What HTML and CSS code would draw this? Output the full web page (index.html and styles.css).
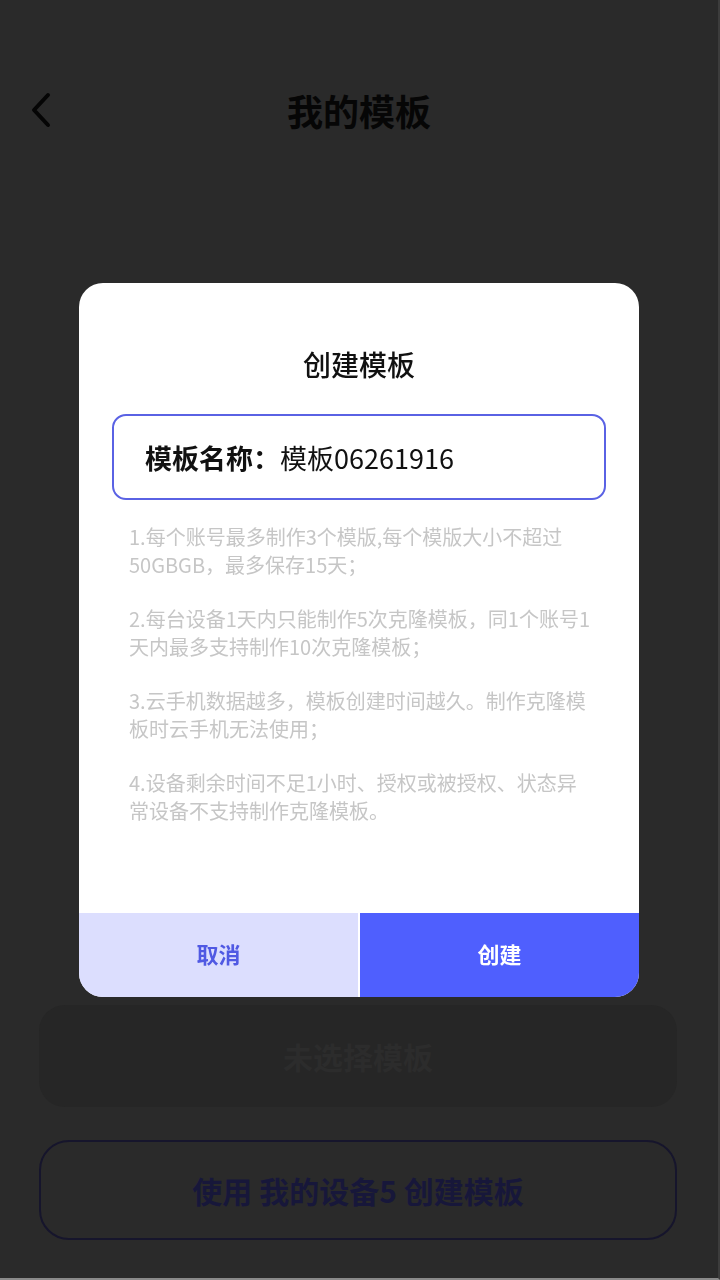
FILE: index.html
```html
<!DOCTYPE html>
<html lang="zh">
<head>
<meta charset="utf-8">
<title>我的模板</title>
<link rel="stylesheet" href="styles.css">
</head>
<body>
<div class="page">
  <header class="topbar">
    <div class="back">
      <svg width="24" height="36" viewBox="0 0 24 36"><path d="M18 3 L4 18 L18 33" fill="none" stroke="#050505" stroke-width="4" stroke-linecap="round" stroke-linejoin="round"/></svg>
    </div>
    <h1 class="title">我的模板</h1>
    <div></div>
  </header>
  <div class="spacer"></div>
  <div class="actions">
    <div class="btn-none">未选择模板</div>
    <div class="btn-use">使用 我的设备5 创建模板</div>
  </div>
</div>

<div class="overlay">
  <div class="dialog">
    <div class="dialog-body">
      <div class="dialog-title">创建模板</div>
      <div class="name-box">
        <span class="name-label">模板名称：</span><span class="name-value">模板06261916</span>
      </div>
      <div class="notes">
        <p>1.每个账号最多制作3个模版,每个模版大小不超过50GBGB，最多保存15天；</p>
        <p>2.每台设备1天内只能制作5次克隆模板，同1个账号1天内最多支持制作10次克隆模板；</p>
        <p>3.云手机数据越多，模板创建时间越久。制作克隆模板时云手机无法使用；</p>
        <p>4.设备剩余时间不足1小时、授权或被授权、状态异常设备不支持制作克隆模板。</p>
      </div>
    </div>
    <div class="dialog-buttons">
      <div class="btn-cancel">取消</div>
      <div class="btn-create">创建</div>
    </div>
  </div>
</div>
</body>
</html>
```

FILE: styles.css
```css
* { box-sizing: border-box; }
html, body {
  margin: 0;
  padding: 0;
  width: 720px;
  height: 1280px;
  overflow: hidden;
}
body {
  background: #2a2a2a;
  font-family: "Noto Sans CJK SC", "Noto Sans", sans-serif;
  border-bottom: 2px solid #8a8a8a;
  border-right: 2px solid #3c3c3c;
}
.page {
  height: 1278px;
  display: flex;
  flex-direction: column;
}
.topbar {
  margin-top: 80px;
  height: 60px;
  display: grid;
  grid-template-columns: 100px 1fr 100px;
  align-items: center;
}
.back {
  padding-left: 30px;
  display: flex;
  align-items: center;
}
.back svg { display: block; }
.title {
  margin: 0;
  text-align: center;
  font-size: 36px;
  font-weight: 700;
  color: #060606;
  line-height: 56px;
}
.spacer { flex: 1; }
.actions {
  padding: 0 41px 38px 39px;
  display: flex;
  flex-direction: column;
  gap: 33px;
}
.btn-none {
  height: 102px;
  border-radius: 26px;
  background: #262626;
  color: #2c2c2c;
  font-size: 30px;
  font-weight: 700;
  display: flex;
  align-items: center;
  justify-content: center;
}
.btn-use {
  height: 100px;
  border-radius: 30px;
  border: 2px solid #16152c;
  color: #17173a;
  font-size: 30px;
  font-weight: 700;
  display: flex;
  align-items: center;
  justify-content: center;
  white-space: pre;
}
.overlay {
  position: fixed;
  left: 0;
  top: 0;
  width: 720px;
  height: 1280px;
  display: flex;
  align-items: center;
  justify-content: center;
  padding-right: 2px;
}
.dialog {
  width: 560px;
  height: 714px;
  background: #ffffff;
  border-radius: 24px;
  overflow: hidden;
  display: flex;
  flex-direction: column;
}
.dialog-body {
  flex: 1;
  padding: 61px 33px 0 33px;
  display: flex;
  flex-direction: column;
}
.dialog-title {
  text-align: center;
  font-size: 28px;
  line-height: 40px;
  font-weight: 500;
  color: #111111;
}
.name-box {
  margin-top: 30px;
  height: 86px;
  border: 2px solid #5a62e4;
  border-radius: 14px;
  padding-left: 31px;
  display: flex;
  align-items: center;
  font-size: 27px;
  color: #111111;
}
.name-label { font-weight: 700; }
.name-value { font-weight: 400; margin-left: 0; }
.notes {
  margin-top: 23px;
  padding: 0 11px 0 17px;
}
.notes p {
  margin: 0 0 26px 0;
  font-size: 20px;
  line-height: 28px;
  color: #c6c6c6;
}
.dialog-buttons {
  height: 84px;
  display: flex;
  gap: 2px;
}
.btn-cancel, .btn-create {
  flex: 1;
  display: flex;
  align-items: center;
  justify-content: center;
  font-size: 22px;
  font-weight: 700;
  padding-bottom: 5px;
}
.btn-cancel {
  background: #dcdefe;
  color: #5059e3;
}
.btn-create {
  background: #4f5ffe;
  color: #ffffff;
}
```
